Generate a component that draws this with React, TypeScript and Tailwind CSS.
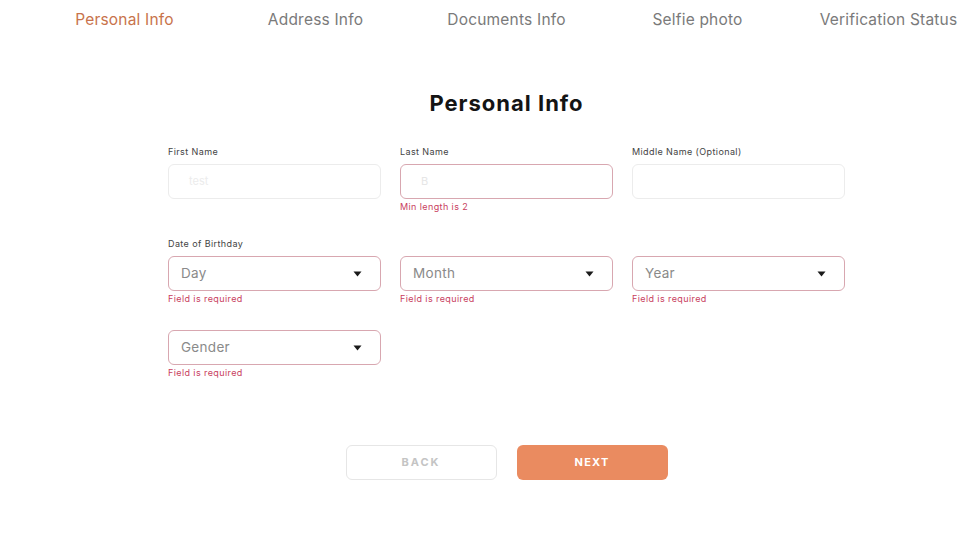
import React from "react";

const tabs = ["Personal Info", "Address Info", "Documents Info", "Selfie photo", "Verification Status"];

function Caret() {
  return (
    <svg width="9" height="6" viewBox="0 0 9 6" className="shrink-0">
      <path d="M0.5 0.5 L8.5 0.5 L4.5 5.5 Z" fill="#1a1a1a" />
    </svg>
  );
}

function Label({ children }: { children?: React.ReactNode }) {
  return <div className="h-[12px] text-[9px] leading-[12px] tracking-[0.4px] text-[#444] mb-[6px]">{children}</div>;
}

function Err({ children }: { children?: React.ReactNode }) {
  return <div className="h-[12px] mt-[2px] text-[9px] leading-[12px] tracking-[0.4px] text-[#c8405e]">{children}</div>;
}

function Select({ text, error }: { text: string; error?: string }) {
  return (
    <div>
      <div className="h-[35px] rounded-[6px] border border-[#d8a7b0] flex items-center justify-between pl-[12px] pr-[18px]">
        <span className="text-[13.5px] tracking-[0.3px] text-[#8a8a8a]">{text}</span>
        <Caret />
      </div>
      <Err>{error}</Err>
    </div>
  );
}

export default function App() {
  return (
    <div className="w-[975px] h-[540px] bg-white overflow-hidden" style={{ fontFamily: "Inter, 'Open Sans', sans-serif" }}>
      <div className="flex h-[40px] items-center pl-[29px] whitespace-nowrap">
        {tabs.map((t, i) => (
          <div
            key={t}
            className={`w-[191px] shrink-0 text-center text-[15.5px] tracking-[0.2px] ${i === 0 ? "text-[#c8734b]" : "text-[#7a7a7a]"}`}
          >
            {t}
          </div>
        ))}
      </div>

      <div className="ml-[168px] w-[677px]">
        <h1 className="mt-[49px] h-[28px] leading-[28px] text-center text-[22px] tracking-[1px] font-bold text-[#141414]">Personal Info</h1>

        <div className="mt-[29px] grid grid-cols-3 gap-x-[19px]">
          <div>
            <Label>First Name</Label>
            <div className="h-[35px] rounded-[6px] border border-[#ececec] flex items-center pl-[20px]">
              <span className="text-[11px] text-[#ececec]">test</span>
            </div>
            <Err />
          </div>
          <div>
            <Label>Last Name</Label>
            <div className="h-[35px] rounded-[6px] border border-[#d8a7b0] flex items-center pl-[20px]">
              <span className="text-[11px] text-[#e6e6e6]">B</span>
            </div>
            <Err>Min length is 2</Err>
          </div>
          <div>
            <Label>Middle Name (Optional)</Label>
            <div className="h-[35px] rounded-[6px] border border-[#ececec]" />
            <Err />
          </div>
        </div>

        <div className="mt-[25px]">
          <Label>Date of Birthday</Label>
          <div className="grid grid-cols-3 gap-x-[19px]">
            <Select text="Day" error="Field is required" />
            <Select text="Month" error="Field is required" />
            <Select text="Year" error="Field is required" />
          </div>
        </div>

        <div className="mt-[25px] grid grid-cols-3 gap-x-[19px]">
          <Select text="Gender" error="Field is required" />
        </div>

        <div className="mt-[66px] flex justify-center gap-x-[20px]">
          <button className="w-[151px] h-[35px] rounded-[6px] border border-[#e6e6e6] bg-white text-[11px] font-bold tracking-[2px] text-[#c4c4c4]">
            BACK
          </button>
          <button className="w-[151px] h-[35px] rounded-[6px] bg-[#ea8b60] text-[11px] font-bold tracking-[1.2px] text-white">
            NEXT
          </button>
        </div>
      </div>
    </div>
  );
}
